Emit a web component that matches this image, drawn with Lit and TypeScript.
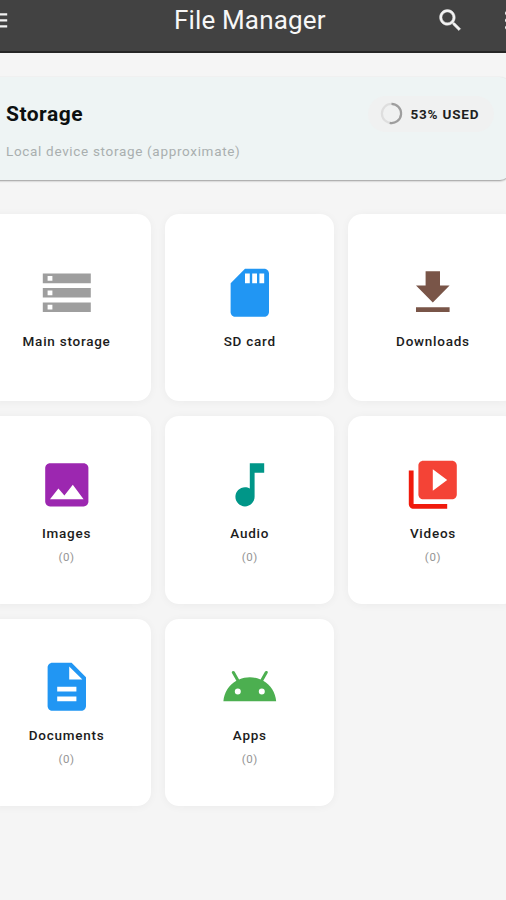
import { LitElement, html, css, svg, nothing } from "lit";
import { customElement, property } from "lit/decorators.js";

const icons: Record<string, unknown> = {
  storage: svg`<path fill="#9e9e9e" d="M2 20h20v-4H2v4zm2-3h2v2H4v-2zM2 4v4h20V4H2zm4 3H4V5h2v2zm-4 7h20v-4H2v4zm2-3h2v2H4v-2z"/>`,
  sd: svg`<path fill="#2196f3" d="M18 2h-8L4.02 8 4 20c0 1.1.9 2 2 2h12c1.1 0 2-.9 2-2V4c0-1.1-.9-2-2-2zm-6 6h-2V4h2v4zm3 0h-2V4h2v4zm3 0h-2V4h2v4z"/>`,
  download: svg`<path fill="#795548" d="M19 9h-4V3H9v6H5l7 7 7-7zM5 18v2h14v-2H5z"/>`,
  image: svg`<path fill="#9c27b0" d="M21 19V5c0-1.1-.9-2-2-2H5c-1.1 0-2 .9-2 2v14c0 1.1.9 2 2 2h14c1.1 0 2-.9 2-2z"/><path fill="#fff" d="M8.5 13.5l2.5 3.01L14.5 12l4.5 6H5l3.5-4.5z"/>`,
  audio: svg`<path fill="#009688" d="M12 3v10.55c-.59-.34-1.27-.55-2-.55-2.21 0-4 1.79-4 4s1.79 4 4 4 4-1.79 4-4V7h4V3h-6z"/>`,
  video: svg`<path fill="#f01a0c" d="M4 6H2v14c0 1.1.9 2 2 2h14v-2H4V6z"/><path fill="#f44336" d="M20 2H8c-1.1 0-2 .9-2 2v12c0 1.1.9 2 2 2h12c1.1 0 2-.9 2-2V4c0-1.1-.9-2-2-2zm-8 12.5v-9l6 4.5-6 4.5z"/>`,
  document: svg`<path fill="#2196f3" d="M14 2H6c-1.1 0-1.99.9-1.99 2L4 20c0 1.1.89 2 1.99 2H18c1.1 0 2-.9 2-2V8l-6-6zm2 16H8v-2h8v2zm0-4H8v-2h8v2zm-3-5V3.5L18.5 9H13z"/>`,
  android: svg`<path fill="#4caf50" d="M17.6 9.48l1.84-3.18c.16-.31.04-.69-.26-.85-.29-.15-.65-.06-.83.22l-1.88 3.24c-2.86-1.21-6.08-1.21-8.94 0L5.65 5.67c-.19-.29-.58-.38-.87-.2-.28.18-.37.54-.22.83L6.4 9.48C3.3 11.25 1.28 14.44 1 18h22c-.28-3.56-2.3-6.75-5.4-8.52zM7 15.25a1.25 1.25 0 110-2.5 1.25 1.25 0 010 2.5zm10 0a1.25 1.25 0 110-2.5 1.25 1.25 0 010 2.5z"/>`,
};

@customElement("storage-tile")
class StorageTile extends LitElement {
  @property() icon = "";
  @property() label = "";
  @property() count = "";
  static styles = css`
    :host {
      box-sizing: border-box;
      display: flex;
      flex-direction: column;
      align-items: center;
      justify-content: center;
      background: #fff;
      border-radius: 14px;
      box-shadow: 0 1px 8px rgba(0, 0, 0, 0.045);
      white-space: nowrap;
    }
    svg { width: 57.6px; height: 57.6px; display: block; }
    .label {
      margin-top: 11.5px;
      font-size: 13.5px;
      line-height: 17px;
      font-weight: 500;
      letter-spacing: 0.75px;
      color: #1c1c1c;
    }
    .count {
      margin-top: 8px;
      font-size: 11.5px;
      line-height: 15px;
      letter-spacing: 0.6px;
      color: #959595;
    }
  `;
  render() {
    return html`<svg viewBox="0 0 24 24">${icons[this.icon]}</svg>
      <div class="label">${this.label}</div>
      ${this.count ? html`<div class="count">${this.count}</div>` : nothing}`;
  }
}

const tiles = [
  ["storage", "Main storage", ""],
  ["sd", "SD card", ""],
  ["download", "Downloads", ""],
  ["image", "Images", "(0)"],
  ["audio", "Audio", "(0)"],
  ["video", "Videos", "(0)"],
  ["document", "Documents", "(0)"],
  ["android", "Apps", "(0)"],
];

@customElement("app-root")
class AppRoot extends LitElement {
  static styles = css`
    :host {
      display: block;
      width: 506px;
      height: 900px;
      overflow: hidden;
      background: #f5f5f5;
      font-family: Roboto, "Liberation Sans", sans-serif;
    }
    .page { width: 536px; margin-left: -18px; }
    header {
      box-sizing: border-box;
      height: 53px;
      background: #424242;
      border-bottom: 2px solid #262626;
      display: grid;
      grid-template-columns: 60px 1fr 57px 25px;
      padding-bottom: 11px;
      align-items: center;
    }
    header svg { width: 28.8px; height: 28.8px; display: block; fill: #f2f2f2; }
    h1 {
      margin: 0;
      padding-left: 132px;
      font-size: 26px;
      font-weight: 400;
      line-height: 30px;
      letter-spacing: 0.15px;
      color: #f7f7f7;
      white-space: nowrap;
    }
    .card {
      box-sizing: border-box;
      width: 528px;
      height: 103px;
      margin-top: 23.5px;
      padding: 18px 16px 0 24px;
      background: #eef4f4;
      border-radius: 10px;
      box-shadow: 0 1px 2px rgba(0, 0, 0, 0.38);
    }
    .top { display: flex; justify-content: space-between; align-items: center; height: 38px; }
    h2 { margin: 0; font-size: 21px; font-weight: 700; letter-spacing: 0.5px; color: #0c1010; }
    .used {
      box-sizing: border-box;
      display: flex;
      align-items: center;
      width: 126px;
      height: 36px;
      padding-left: 12px;
      gap: 7.5px;
      border-radius: 18px;
      background: #f0f1f1;
      font-size: 13.5px;
      font-weight: 700;
      letter-spacing: 0.8px;
      color: #1f1f1f;
      white-space: nowrap;
    }
    .used svg { width: 23px; height: 23px; flex: none; }
    .sub { margin-top: 8px; font-size: 13.5px; line-height: 20px; letter-spacing: 0.68px; color: #a9afaf; }
    .grid {
      display: grid;
      grid-template-columns: repeat(3, 169.2px);
      grid-auto-rows: 187.5px;
      gap: 15px 14px;
      margin-top: 34px;
    }
    storage-tile:nth-child(-n + 3) { padding-bottom: 1px; }
    storage-tile:nth-child(n + 4) { padding-top: 1px; }
  `;
  render() {
    return html`<div class="page">
      <header>
        <svg viewBox="0 0 24 24"><path d="M3 18h18v-2H3v2zm0-5h18v-2H3v2zm0-7v2h18V6H3z" /></svg>
        <h1>File Manager</h1>
        <svg viewBox="0 0 24 24"><path stroke="#f2f2f2" stroke-width=".4" d="M15.5 14h-.79l-.28-.27C15.41 12.59 16 11.11 16 9.5 16 5.91 13.09 3 9.5 3S3 5.91 3 9.5 5.91 16 9.5 16c1.61 0 3.09-.59 4.23-1.57l.27.28v.79l5 4.99L20.49 19l-4.99-5zm-6 0C7.01 14 5 11.99 5 9.5S7.01 5 9.5 5 14 7.01 14 9.5 11.99 14 9.5 14z" /></svg>
        <svg viewBox="0 0 24 24"><path d="M12 8c1.1 0 2-.9 2-2s-.9-2-2-2-2 .9-2 2 .9 2 2 2zm0 2c-1.1 0-2 .9-2 2s.9 2 2 2 2-.9 2-2-.9-2-2-2zm0 6c-1.1 0-2 .9-2 2s.9 2 2 2 2-.9 2-2-.9-2-2-2z" /></svg>
      </header>
      <section class="card">
        <div class="top">
          <h2>Storage</h2>
          <div class="used">
            <svg viewBox="0 0 23 23" fill="none" stroke-width="2.2">
              <circle cx="11.5" cy="11.5" r="9.6" stroke="#dedede" />
              <path d="M11.5 1.9a9.6 9.6 0 11-1.8 19.03" stroke="#9e9e9e" />
            </svg>
            <span>53% USED</span>
          </div>
        </div>
        <div class="sub">Local device storage (approximate)</div>
      </section>
      <div class="grid">
        ${tiles.map(([i, l, c]) => html`<storage-tile .icon=${i} .label=${l} .count=${c}></storage-tile>`)}
      </div>
    </div>`;
  }
}
